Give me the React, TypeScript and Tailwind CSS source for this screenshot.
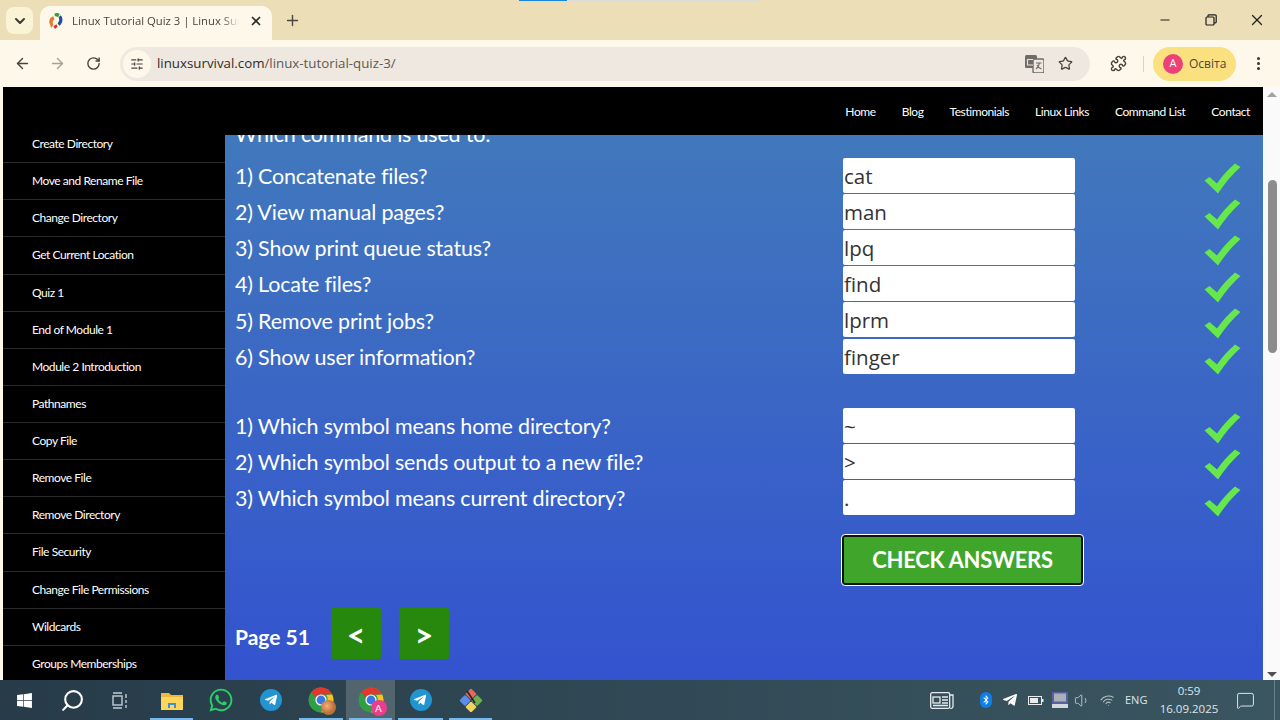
import React from "react";
import { ChevronDown, X, Plus, ArrowLeft, ArrowRight, RotateCw, Star, EllipsisVertical, Minus, Search, SlidersHorizontal, Puzzle, Volume1, Wifi, MessageSquare } from "lucide-react";
import { FaWindows, FaWhatsapp, FaTelegramPlane, FaBluetoothB } from "react-icons/fa";

const side = ["Create Directory","Move and Rename File","Change Directory","Get Current Location","Quiz 1","End of Module 1","Module 2 Introduction","Pathnames","Copy File","Remove File","Remove Directory","File Security","Change File Permissions","Wildcards","Groups Memberships"];
const nav = ["Home","Blog","Testimonials","Linux Links","Command List","Contact"];
const q1 = [["1) Concatenate files?","cat"],["2) View manual pages?","man"],["3) Show print queue status?","lpq"],["4) Locate files?","find"],["5) Remove print jobs?","lprm"],["6) Show user information?","finger"]];
const q2 = [["1) Which symbol means home directory?","~"],["2) Which symbol sends output to a new file?",">"],["3) Which symbol means current directory?","."]];

function Check() {
  return (
    <svg width="37" height="31" viewBox="0 0 37 31" className="shrink-0">
      <path d="M0.5 17.5 L5.5 14 L13 20.5 Q21 9 31 0.5 L36.5 4 Q25 14 14 30.5 Z" fill="#66e84a" />
    </svg>
  );
}

function Row({ q, a }: { q: string; a: string }) {
  return (
    <div className="flex h-[36.2px] items-center">
      <div className="w-[608px] shrink-0 pt-[3px] text-[21.5px] leading-none tracking-[-0.2px] text-white">{q}</div>
      <div className="flex h-[35px] w-[232px] shrink-0 items-center rounded-[2px] bg-white pl-px pt-[2px] font-['Open_Sans','Noto_Sans',sans-serif] text-[20.5px] text-[#333]">{a}</div>
      <div className="ml-[129px] mt-[7px]"><Check /></div>
    </div>
  );
}

function Chrome({ badge }: { badge?: boolean }) {
  return (
    <div className="relative h-[26px] w-[26px]">
      <svg width="26" height="26" viewBox="0 0 26 26">
        <circle cx="13" cy="13" r="12.5" fill="#2f9e44" />
        <path d="M13 .5A12.5 12.5 0 0 1 24.2 7.5H13A5.6 5.6 0 0 0 7.8 11L3.2 5.2A12.5 12.5 0 0 1 13 .5Z" fill="#e0382e" />
        <path d="M24.2 7.5A12.5 12.5 0 0 1 13 25.5L18 16A5.6 5.6 0 0 0 18 8Z" fill="#f7c325" />
        <circle cx="13" cy="13" r="5.6" fill="#fff" />
        <circle cx="13" cy="13" r="4.4" fill="#3b78e7" />
      </svg>
      {badge ? (
        <div className="absolute -bottom-[3px] -right-[3px] flex h-[16px] w-[16px] items-center justify-center rounded-full bg-[#e83e8c] text-[10px] text-white">A</div>
      ) : (
        <div className="absolute -bottom-[2px] -right-[2px] h-[15px] w-[15px] rounded-full bg-[radial-gradient(circle_at_40%_40%,#f0b27a,#c0703a_55%,#6e8b3d)]" />
      )}
    </div>
  );
}

function TaskItem({ children, w, active, under }: { children: React.ReactNode; w: string; active?: boolean; under?: boolean }) {
  return (
    <div className={`relative flex h-10 items-center justify-center ${w} ${active ? "bg-[#52656f]" : ""}`}>
      {children}
      {under && <div className="absolute bottom-0 left-[3px] right-[3px] h-[2px] bg-[#76b9ed]" />}
    </div>
  );
}

export default function App() {
  return (
    <div className="relative flex h-[720px] w-[1280px] flex-col overflow-hidden bg-[#fdf8ea] font-['Lato',sans-serif]">
      <div className="flex h-[40px] shrink-0 items-end bg-[#ecdfb8] pl-[6px] font-['Open_Sans',sans-serif]">
        <div className="absolute left-[519px] top-0 h-px w-[48px] bg-[#1a84e0]" />
        <div className="absolute left-[568px] top-0 h-px w-[192px] bg-[#dcdcd8]" />
        <div className="mb-[6px] flex h-[27px] w-[27px] items-center justify-center rounded-lg bg-[#fbf3d5]">
          <ChevronDown size={16} strokeWidth={3} className="text-[#3b3a33]" />
        </div>
        <div className="ml-[7px] flex h-[34px] w-[232px] items-center rounded-t-[10px] bg-[#fdf8ea] pb-[4px] pl-[7px]">
          <svg width="18" height="18" viewBox="0 0 17 17" className="shrink-0">
            <path d="M3 12C1 8 3 5 6 4L7 7C5 8 5 10 6 12L4 15Z" fill="#e8762c" />
            <path d="M7 1.5C9 .5 11 1 12 2L10.5 5C9.5 4 8.5 4 7.5 4Z" fill="#3c9a46" />
            <path d="M13 3C15.5 6 15 10 12 13L10 11C11.5 9 12 7 11 5Z" fill="#1f4e9c" />
            <path d="M6 13.5L9 11.5L10 14L7.5 16Z" fill="#d0342c" />
          </svg>
          <span className="ml-[7px] w-[167px] overflow-hidden whitespace-nowrap text-[11.3px] text-[#45443d] [mask-image:linear-gradient(to_right,#000_90%,transparent)]">Linux Tutorial Quiz 3 | Linux Survival</span>
          <X size={14} strokeWidth={3} className="ml-[10px] text-[#2c2b26]" />
        </div>
        <div className="mb-[10px] ml-[10px] flex h-[20px] w-[20px] items-center justify-center">
          <Plus size={17} strokeWidth={2} className="text-[#4a483f]" />
        </div>
        <div className="ml-auto flex h-[40px] items-center">
          <div className="flex w-[46px] justify-center"><Minus size={14} className="text-[#1f1f1c]" /></div>
          <div className="flex w-[46px] justify-center">
            <svg width="12" height="12" viewBox="0 0 12 12" fill="none" stroke="#1f1f1c" strokeWidth="1.2"><rect x="1" y="3" width="8" height="8" rx="1" /><path d="M3 3V1.5A.8.8 0 0 1 3.8.8H10.2A1 1 0 0 1 11.2 1.8V8A.8.8 0 0 1 10.4 8.8H9" /></svg>
          </div>
          <div className="flex w-[46px] justify-center"><X size={18} strokeWidth={1.6} className="text-[#1f1f1c]" /></div>
        </div>
      </div>

      <div className="flex h-[47px] shrink-0 items-center bg-[#fdf8ea] font-['Open_Sans',sans-serif]">
        <ArrowLeft size={17} strokeWidth={2} className="ml-[14px] text-[#45443d]" />
        <ArrowRight size={17} strokeWidth={2} className="ml-[18px] text-[#a5a399]" />
        <RotateCw size={15} strokeWidth={2.2} className="ml-[20px] text-[#45443d]" />
        <div className="ml-[19px] flex h-[34px] w-[970px] items-center rounded-full bg-[#efe8e0] pl-[3px]">
          <div className="flex h-[28px] w-[28px] items-center justify-center rounded-full bg-[#fdf8ea]">
            <SlidersHorizontal size={14} className="text-[#45443d]" />
          </div>
          <div className="ml-[6px] text-[13.3px] text-[#5c5a52]"><span className="text-[#2d2c28]">linuxsurvival.com</span>/linux-tutorial-quiz-3/</div>
          <svg width="19" height="18" viewBox="0 0 19 18" className="ml-auto">
            <rect x="0" y="0" width="12" height="13" rx="1.5" fill="#6e6c66" />
            <rect x="8" y="4" width="11" height="14" rx="1.5" fill="#efe8e0" stroke="#6e6c66" strokeWidth="1.4" />
            <path d="M8.2 4.5H2.5V10H8M11 8H16.5M14.5 8C14 11 12.5 13 11 14M12 10C13 12 14.5 13.5 16.5 14" fill="none" stroke="#e8e4dc" strokeWidth="1.2" />
            <path d="M11 8H16.5M14.5 8C14 11 12.5 13 11 14M12 10C13 12 14.5 13.5 16.5 14" fill="none" stroke="#6e6c66" strokeWidth="1.2" />
          </svg>
          <Star size={15} strokeWidth={2} className="ml-[14px] mr-[17px] text-[#45443d]" />
        </div>
        <Puzzle size={17} strokeWidth={2} className="ml-[20px] text-[#45443d]" />
        <div className="ml-[16px] h-[16px] w-px bg-[#f2d66e]" />
        <div className="ml-[9px] flex h-[34px] w-[83px] items-center rounded-full bg-[#fbe07f] pl-[10px]">
          <div className="flex h-[20px] w-[20px] items-center justify-center rounded-full bg-[#ec407a] text-[11px] text-white">A</div>
          <span className="ml-[6px] text-[12px] text-[#4a473a]">Освіта</span>
        </div>
        <EllipsisVertical size={17} strokeWidth={2.4} className="ml-[14px] text-[#3b3a33]" />
      </div>

      <div className="flex h-[593px] shrink-0">
        <div className="h-full w-[3px] shrink-0 bg-[#fdf8ea]" />
        <div className="flex min-w-0 flex-1 flex-col overflow-hidden bg-black">
          <div className="flex h-[48px] shrink-0 items-center justify-end gap-[26px] bg-black pr-[13px] pt-[1px] text-[12px] tracking-[-0.42px] text-white">
            {nav.map((n) => <span key={n}>{n}</span>)}
          </div>
          <div className="flex min-h-0 flex-1">
            <div className="w-[222px] shrink-0 overflow-hidden">
              <div className="-mt-[9px]">
                {side.map((s) => (
                  <div key={s} className="flex h-[37.13px] items-center border-b border-[#2a2a2a] pl-[29px] text-[12px] tracking-[-0.45px] text-white">{s}</div>
                ))}
              </div>
            </div>
            <div className="min-w-0 flex-1 overflow-hidden bg-[linear-gradient(to_bottom,#4178bc,#3353cf)] pl-[10px]">
              <div className="-mt-[19px] mb-[5px] h-[36px] text-[21.5px] leading-[36px] tracking-[-0.2px] text-white">Which command is used to:</div>
              <div>
                {q1.map(([q, a]) => <Row key={q} q={q} a={a} />)}
              </div>
              <div className="mt-[33px]">
                {q2.map(([q, a]) => <Row key={q} q={q} a={a} />)}
              </div>
              <div className="ml-[607px] mt-[19px] flex h-[50px] w-[241px] items-center justify-center rounded-[3px] border-2 border-[#111] bg-[#3fa62b] text-[22px] font-bold tracking-[-0.3px] text-white outline-1 outline-white">CHECK ANSWERS</div>
              <div className="mt-[23px] flex items-center">
                <span className="w-[96px] pt-[8px] text-[21px] font-bold text-white">Page 51</span>
                <div className="flex h-[51px] w-[50px] items-center justify-center rounded-[2px] bg-[#26880c] pt-[3px] text-[32px] font-bold leading-none text-white">&lt;</div>
                <div className="ml-[18px] flex h-[51px] w-[50px] items-center justify-center rounded-[2px] bg-[#26880c] pt-[3px] text-[32px] font-bold leading-none text-white">&gt;</div>
              </div>
            </div>
          </div>
        </div>
        <div className="relative w-[17px] shrink-0 bg-[#fafafa]">
          <div className="absolute left-[4px] top-[5px] h-0 w-0 border-x-[5px] border-b-[5px] border-x-transparent border-b-[#a3a3a3]" />
          <div className="absolute left-[5px] top-[93px] h-[173px] w-[9px] rounded-full bg-[#8c8c8c]" />
          <div className="absolute bottom-[3px] left-[4px] h-0 w-0 border-x-[5px] border-t-[5px] border-x-transparent border-t-[#505050]" />
        </div>
      </div>

      <div className="flex h-[40px] shrink-0 items-center bg-[linear-gradient(to_right,#273b49,#3a5661)] text-white">
        <div className="flex w-[49px] justify-center"><FaWindows size={17} /></div>
        <div className="flex w-[46px] justify-center"><Search size={25} strokeWidth={2} className="-scale-x-100" /></div>
        <div className="flex w-[50px] justify-center">
          <svg width="17" height="17" viewBox="0 0 17 17" fill="none" stroke="#c3ccd1" strokeWidth="1.4"><rect x="1" y="4" width="9" height="9" /><path d="M1 1H10M1 16H10M14 2V6M14 8V11M14 13V16" /></svg>
        </div>
        <TaskItem w="w-[49px] ml-[2px]" under>
          <svg width="22" height="19" viewBox="0 0 22 19"><path d="M0 2H8L10 4H22V8H0Z" fill="#f0b93c" /><path d="M0 6H22V19H0Z" fill="#ffd65c" /><path d="M7 12H15V17H13V14H9V17H7Z" fill="#3f8fd6" /></svg>
        </TaskItem>
        <TaskItem w="w-[50px]"><FaWhatsapp size={26} className="text-[#25d366]" /></TaskItem>
        <TaskItem w="w-[50px]">
          <div className="flex h-[22px] w-[22px] items-center justify-center rounded-full bg-[#2295d0]"><FaTelegramPlane size={14} className="-ml-px text-white" /></div>
        </TaskItem>
        <TaskItem w="w-[50px]" under><Chrome /></TaskItem>
        <TaskItem w="w-[49px]" active under><Chrome badge /></TaskItem>
        <TaskItem w="w-[51px]" under>
          <div className="flex h-[22px] w-[22px] items-center justify-center rounded-full bg-[#2295d0]"><FaTelegramPlane size={14} className="-ml-px text-white" /></div>
        </TaskItem>
        <TaskItem w="w-[49px]" under>
          <svg width="24" height="24" viewBox="0 0 24 24">
            <rect x="2" y="8.5" width="8" height="8" rx="1" transform="rotate(45 6 12.5)" fill="#5b8def" />
            <rect x="14" y="8.5" width="8" height="8" rx="1" transform="rotate(45 18 12.5)" fill="#6fb04a" />
            <rect x="8" y="15" width="8" height="8" rx="1" transform="rotate(45 12 19)" fill="#f2d45c" />
            <rect x="8" y="2" width="8" height="8" rx="1" transform="rotate(45 12 6)" fill="#e06a5e" />
            <path d="M8 3L16 15" stroke="#222" strokeWidth="1.5" />
          </svg>
        </TaskItem>
        <div className="ml-auto flex items-center font-['Open_Sans',sans-serif] text-[#dfe5e8]">
          <svg width="24" height="17" viewBox="0 0 24 17" fill="none" stroke="#e8ecee" strokeWidth="1.3"><rect x=".7" y=".7" width="19" height="15.6" rx="1.5" /><path d="M20 3H23V14A2 2 0 0 1 20 16" /><rect x="3" y="5" width="7" height="6" /><path d="M12 5H18M12 8H18M12 11H18M3 13.5H18" /></svg>
          <div className="ml-[26px] flex h-[16px] w-[12px] items-center justify-center rounded-full bg-[#0f7fe8]"><FaBluetoothB size={10} className="text-white" /></div>
          <FaTelegramPlane size={16} className="ml-[10px] text-white" />
          <svg width="16" height="9" viewBox="0 0 16 9" className="ml-[10px]"><rect x=".5" y=".5" width="13" height="8" fill="none" stroke="#e8ecee" /><rect x="2" y="2" width="8" height="5" fill="#e8ecee" /><rect x="14" y="3" width="1.5" height="3" fill="#e8ecee" /></svg>
          <svg width="16" height="16" viewBox="0 0 16 16" className="ml-[8px]"><rect width="16" height="12" fill="#5a5fa0" /><rect x="2" y="1.5" width="12" height="8" fill="#aab0b8" /><rect y="12" width="16" height="4" fill="#d5d8dc" /></svg>
          <Volume1 size={17} strokeWidth={1.4} className="ml-[6px] text-[#b6c0c5]" />
          <Wifi size={15} strokeWidth={1.6} className="ml-[9px] -rotate-12 text-[#b6c0c5]" />
          <span className="ml-[10px] w-[23px] text-[11px]">ENG</span>
          <div className="ml-[11px] flex w-[60px] flex-col items-center text-[11.5px] leading-[18px]"><span>0:59</span><span>16.09.2025</span></div>
          <MessageSquare size={19} strokeWidth={1.2} className="ml-[17px] text-[#e8ecee]" />
          <div className="ml-[19px] h-[40px] w-px bg-[#6a8089]" />
          <div className="w-[5px]" />
        </div>
      </div>
    </div>
  );
}
